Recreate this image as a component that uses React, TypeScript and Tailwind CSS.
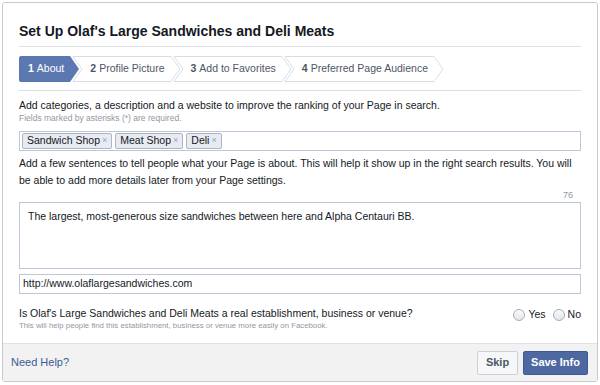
const FONT = { fontFamily: '"Liberation Sans", Arial, Helvetica, sans-serif' };

const TAGS = ['Sandwich Shop', 'Meat Shop', 'Deli'];

const STEPS = [
  { n: '1', label: 'About' },
  { n: '2', label: 'Profile Picture' },
  { n: '3', label: 'Add to Favorites' },
  { n: '4', label: 'Preferred Page Audience' },
];

function Chevron({ active, last }: { active: boolean; last: boolean }) {
  return (
    <svg width={last ? 10 : 14} height="26" viewBox={last ? '0 0 10 26' : '0 0 14 26'} className="block shrink-0">
      <polygon points="0,0 9,13 0,26" fill={active ? '#5b78b0' : '#fff'} />
      {!active && <polyline points="0,0.5 9,13 0,25.5" fill="none" stroke="#d7dde8" />}
      {!last && <polyline points="14,0.5 3,0.5 12,13 3,25.5 14,25.5" fill="none" stroke="#d7dde8" />}
    </svg>
  );
}

function Radio({ label }: { label: string }) {
  return (
    <label className="flex items-center gap-[3px]">
      <span className="block h-[12px] w-[12px] rounded-full border border-[#a8adb6] bg-gradient-to-b from-[#fbfbfb] to-[#e3e5e8]" />
      <span className="text-[10.5px] text-[#141823]">{label}</span>
    </label>
  );
}

export default function App() {
  return (
    <div className="h-[385px] w-[600px] bg-white p-[2px]" style={FONT}>
      <div className="flex h-[380px] w-[596px] flex-col overflow-hidden rounded-[3px] border border-[#c8cacf] bg-white">
        <div className="flex-1 px-[16px]">
          <h1 className="mt-[19px] text-[14px] font-bold leading-[18px] text-[#141823]">
            Set Up Olaf's Large Sandwiches and Deli Meats
          </h1>
          <div className="mt-[6px] w-[562px] border-t border-[#dddfe2]" />

          {/* Steps */}
          <div className="mt-[9px] flex h-[26px] items-stretch">
            {STEPS.map((s, i) => {
              const active = i === 0;
              return (
                <div key={s.n} className="flex items-stretch">
                  <div
                    className={
                      active
                        ? 'flex items-center rounded-l-[2px] bg-[#5b78b0] pl-[9px] pr-[6px] text-[10.5px] text-white'
                        : 'flex items-center border-y border-[#d7dde8] px-[6px] text-[10.5px] text-[#4e5665]'
                    }
                  >
                    <span className="font-bold">{s.n}</span>
                    <span className="ml-[3px]">{s.label}</span>
                  </div>
                  <Chevron active={active} last={i === STEPS.length - 1} />
                </div>
              );
            })}
          </div>
          <div className="mt-[8px] w-[562px] border-t border-[#dddfe2]" />

          {/* About */}
          <p className="mt-[7px] text-[10.5px] leading-[14px] text-[#141823]">
            Add categories, a description and a website to improve the ranking of your Page in search.
          </p>
          <p className="text-[8.5px] leading-[12px] text-[#9197a3]">Fields marked by asterisks (*) are required.</p>

          <div className="mt-[7px] flex h-[20px] w-[562px] items-center gap-[3px] border border-[#bdc7d8] bg-white px-[2px]">
            {TAGS.map((t) => (
              <span
                key={t}
                className="flex h-[16px] items-center rounded-[2px] border border-[#aab5c8] bg-[#e8ebf1] px-[4px] text-[10.5px] text-[#141823]"
              >
                {t}
                <span className="ml-[2px] text-[9px] text-[#9aa3b4]">×</span>
              </span>
            ))}
          </div>

          <p className="mt-[4px] w-[562px] text-[10.5px] leading-[17px] text-[#141823]">
            Add a few sentences to tell people what your Page is about. This will help it show up in the right search
            results. You will be able to add more details later from your Page settings.
          </p>
          <div className="w-[554px] text-right text-[9px] leading-[12px] text-[#9197a3]">76</div>

          <div className="mt-[1px] h-[67px] w-[562px] border border-[#bdc7d8] px-[8px] pt-[6px] text-[10.5px] leading-[14px] text-[#141823]">
            The largest, most-generous size sandwiches between here and Alpha Centauri BB.
          </div>

          <div className="mt-[5px] flex h-[20px] w-[562px] items-center border border-[#bdc7d8] px-[3px] text-[10.5px] text-[#141823]">
            http://www.olaflargesandwiches.com
          </div>

          <div className="mt-[12px] flex w-[562px] items-start justify-between">
            <div>
              <p className="text-[10.5px] leading-[14px] text-[#141823]">
                Is Olaf's Large Sandwiches and Deli Meats a real establishment, business or venue?
              </p>
              <p className="text-[7.8px] leading-[11px] text-[#9197a3]">
                This will help people find this establishment, business or venue more easily on Facebook.
              </p>
            </div>
            <div className="flex items-center gap-[7px] pt-[1px]">
              <Radio label="Yes" />
              <Radio label="No" />
            </div>
          </div>
        </div>

        {/* Footer */}
        <div className="flex h-[38px] items-center justify-between border-t border-[#e1e2e5] bg-[#f2f2f2] pl-[8px] pr-[9px]">
          <a className="text-[11px] text-[#3b5998]">Need Help?</a>
          <div className="flex items-center gap-[5px]">
            <button className="h-[24px] w-[41px] rounded-[2px] border border-[#cdd0d6] bg-[#f6f7f9] text-[11px] font-bold text-[#4e5665]">
              Skip
            </button>
            <button className="h-[24px] w-[65px] rounded-[2px] border border-[#3f5a91] bg-[#4e69a2] text-[11px] font-bold text-white">
              Save Info
            </button>
          </div>
        </div>
      </div>
    </div>
  );
}
